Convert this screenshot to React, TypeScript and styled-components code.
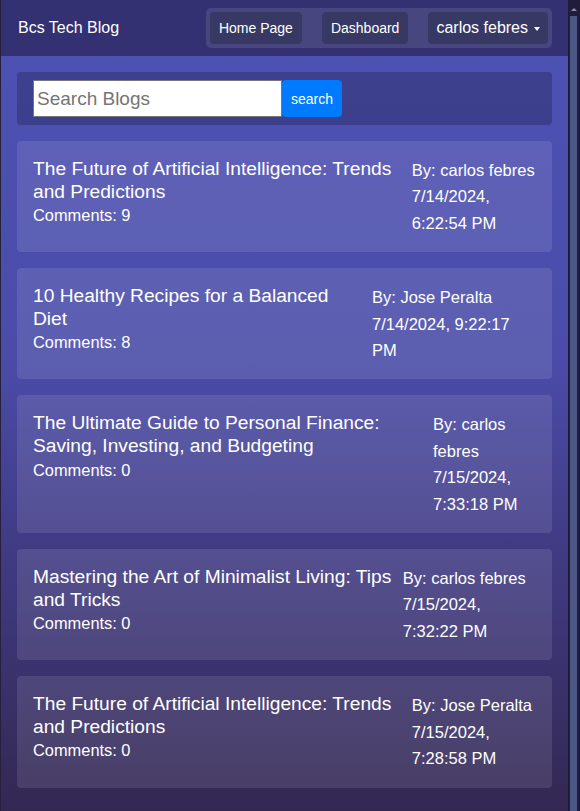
import React from "react";
import styled, { createGlobalStyle } from "styled-components";

const GlobalStyle = createGlobalStyle`
  * { box-sizing: border-box; }
  html, body { margin: 0; padding: 0; height: 100%; overflow: hidden; }
  body {
    font-family: "Liberation Sans", Arial, sans-serif;
    background: #332852;
    color: #fff;
  }
  #root { height: 100%; }
`;

const Frame = styled.div`
  display: flex;
  height: 100vh;
  border-left: 1px solid #27213f;
`;

const Page = styled.div`
  flex: 1;
  min-width: 0;
  display: flex;
  flex-direction: column;
  overflow: hidden;
`;

const Navbar = styled.nav`
  flex-shrink: 0;
  height: 56px;
  background: #333171;
  display: flex;
  align-items: center;
  justify-content: space-between;
  padding: 0 16px 0 17px;
`;

const Brand = styled.span`
  font-size: 16px;
  color: #fff;
`;

const NavGroup = styled.div`
  display: flex;
  align-items: center;
  gap: 20px;
  padding: 4px;
  background: rgba(255, 255, 255, 0.1);
  border-radius: 5px;
`;

const NavButton = styled.button<{ $user?: boolean }>`
  height: 32px;
  display: flex;
  align-items: center;
  border: none;
  border-radius: 4px;
  background: rgba(0, 0, 0, 0.2);
  color: #fff;
  font-family: inherit;
  font-size: ${(p) => (p.$user ? "16px" : "14px")};
  padding: 0 ${(p) => (p.$user ? "8px" : "9px")};
  cursor: pointer;
`;

const Caret = styled.span`
  display: inline-block;
  margin-left: 6px;
  margin-top: 2px;
  border-top: 4px solid #fff;
  border-left: 3.5px solid transparent;
  border-right: 3.5px solid transparent;
`;

const Main = styled.main`
  flex: 1;
  display: flex;
  flex-direction: column;
  gap: 16px;
  padding: 16px;
  background: linear-gradient(
    180deg,
    #4c51b2 0%,
    #4a4ca8 40%,
    #413b84 65%,
    #332852 100%
  );
`;

const SearchBar = styled.form`
  display: flex;
  align-items: center;
  padding: 8px 16px;
  background: rgba(0, 0, 0, 0.2);
  border-radius: 4px;
`;

const SearchInput = styled.input`
  width: 249px;
  height: 37px;
  border: 1px solid #767676;
  background: #fff;
  padding: 0 3px;
  font-family: inherit;
  font-size: 19px;
  color: #222;
  outline: none;
  &::placeholder { color: #757575; }
`;

const SearchButton = styled.button`
  width: 60px;
  height: 37px;
  border: none;
  border-radius: 4px;
  background: #007bff;
  color: #fff;
  font-family: inherit;
  font-size: 14px;
  cursor: pointer;
`;

const Card = styled.article`
  display: flex;
  justify-content: space-between;
  gap: 10px;
  padding: 16px;
  border-radius: 4px;
  background: rgba(255, 255, 255, 0.1);
`;

const TitleCol = styled.div`
  flex: 0 1 auto;
  min-width: 0;
`;

const Title = styled.h5`
  margin: 0;
  font-size: 19.2px;
  line-height: 1.2;
  font-weight: 400;
`;

const Comments = styled.div`
  font-size: 16.4px;
  line-height: 24px;
`;

const Meta = styled.div`
  flex: 0 1 auto;
  font-size: 16.5px;
  line-height: 26.4px;
`;

const ScrollTrack = styled.div`
  width: 12px;
  flex-shrink: 0;
  display: flex;
  flex-direction: column;
  align-items: center;
  background: #221c3b;
  padding: 0 3px 0 2px;
`;

const ScrollArrow = styled.div`
  margin-top: 5px;
  height: 6px;
  border-bottom: 3px solid #8a8fae;
  border-left: 3px solid transparent;
  border-right: 3px solid transparent;
  width: 0;
`;

const ScrollThumb = styled.div`
  margin-top: 5px;
  align-self: stretch;
  flex: 1;
  background: #4c5886;
`;

const posts = [
  {
    title: "The Future of Artificial Intelligence: Trends and Predictions",
    comments: 9,
    author: "carlos febres",
    date: "7/14/2024, 6:22:54 PM",
  },
  {
    title: "10 Healthy Recipes for a Balanced Diet",
    comments: 8,
    author: "Jose Peralta",
    date: "7/14/2024, 9:22:17 PM",
  },
  {
    title:
      "The Ultimate Guide to Personal Finance: Saving, Investing, and Budgeting",
    comments: 0,
    author: "carlos febres",
    date: "7/15/2024, 7:33:18 PM",
  },
  {
    title: "Mastering the Art of Minimalist Living: Tips and Tricks",
    comments: 0,
    author: "carlos febres",
    date: "7/15/2024, 7:32:22 PM",
  },
  {
    title: "The Future of Artificial Intelligence: Trends and Predictions",
    comments: 0,
    author: "Jose Peralta",
    date: "7/15/2024, 7:28:58 PM",
  },
];

export default function App() {
  return (
    <>
      <GlobalStyle />
      <Frame>
        <Page>
          <Navbar>
            <Brand>Bcs Tech Blog</Brand>
            <NavGroup>
              <NavButton>Home Page</NavButton>
              <NavButton>Dashboard</NavButton>
              <NavButton $user>
                carlos febres
                <Caret />
              </NavButton>
            </NavGroup>
          </Navbar>
          <Main>
            <SearchBar onSubmit={(e) => e.preventDefault()}>
              <SearchInput placeholder="Search Blogs" />
              <SearchButton type="submit">search</SearchButton>
            </SearchBar>
            {posts.map((p, i) => (
              <Card key={i}>
                <TitleCol>
                  <Title>{p.title}</Title>
                  <Comments>Comments: {p.comments}</Comments>
                </TitleCol>
                <Meta>
                  <div>By: {p.author}</div>
                  <div>{p.date}</div>
                </Meta>
              </Card>
            ))}
          </Main>
        </Page>
        <ScrollTrack>
          <ScrollArrow />
          <ScrollThumb />
        </ScrollTrack>
      </Frame>
    </>
  );
}
